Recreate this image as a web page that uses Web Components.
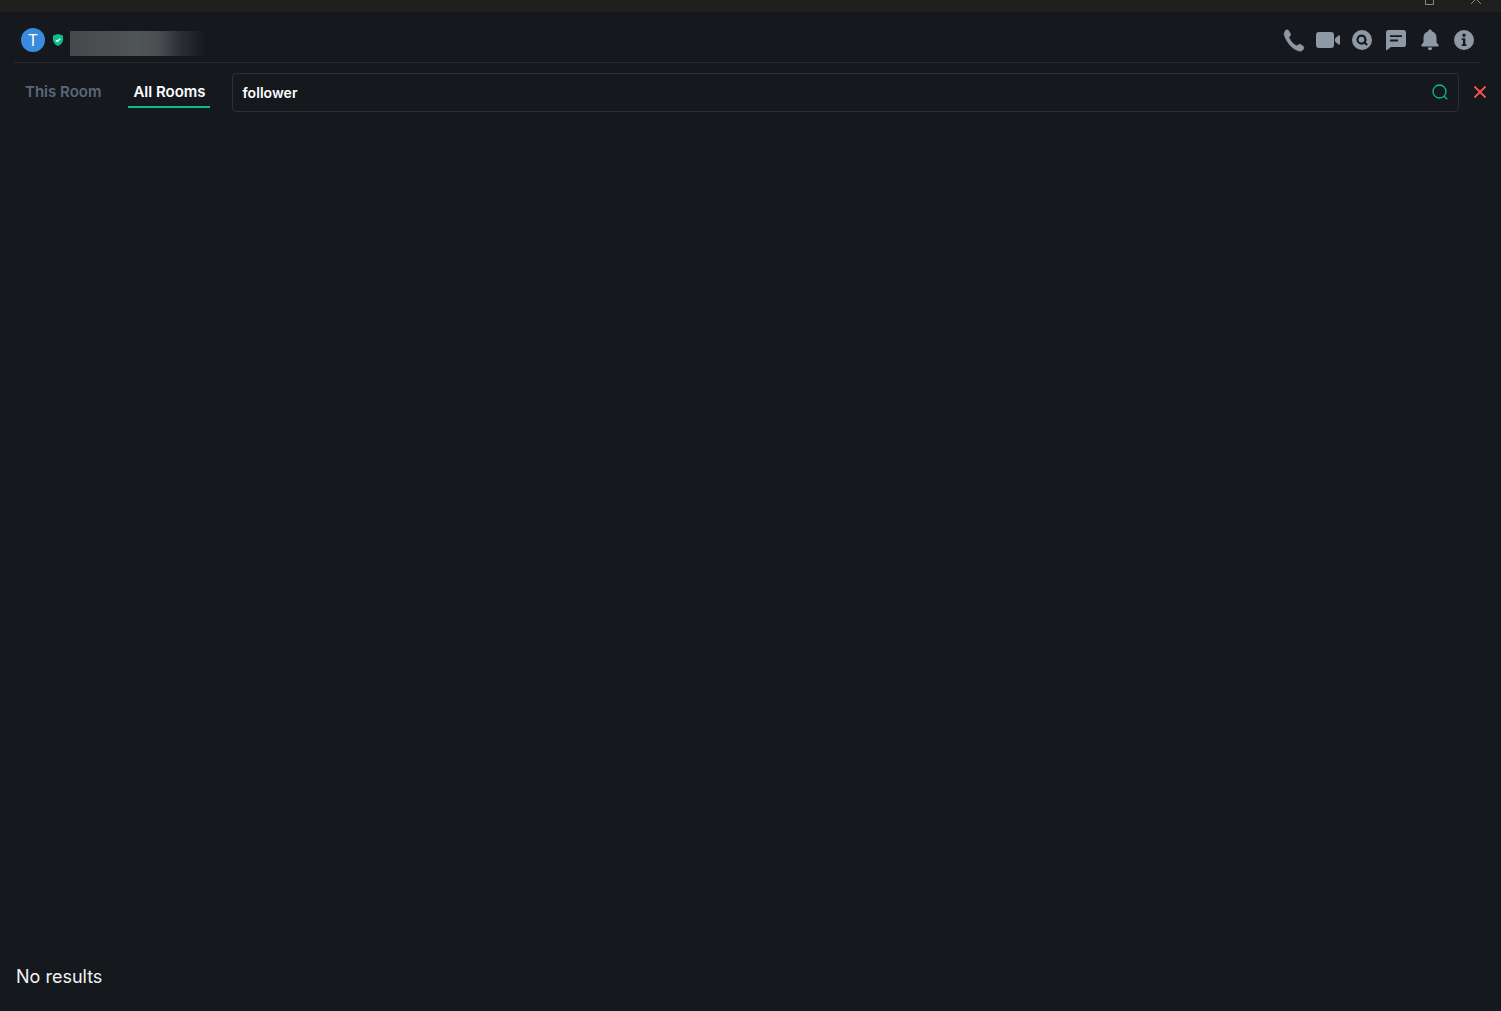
<!DOCTYPE html>
<html>
<head>
<meta charset="utf-8">
<title>Search</title>
<style>
  html, body { margin: 0; height: 100%; background: #15191e; }
  body { font-family: Inter, "Liberation Sans", sans-serif; color: #fff; overflow: hidden; }
</style>
</head>
<body>
<chat-app>
  <title-bar slot="top"></title-bar>
  <room-header slot="top"></room-header>
  <search-bar slot="top" value="follower"></search-bar>
  <span slot="status">No results</span>
</chat-app>

<script>
class ChatApp extends HTMLElement {
  constructor() {
    super();
    this.attachShadow({mode: 'open'});
    this.shadowRoot.innerHTML = `
      <style>
        :host { display: flex; flex-direction: column; height: 100vh; }
        main { flex: 1; }
        footer { height: 45px; padding-left: 16px; font-size: 18px; line-height: 22px; color: #f2f3f4; }
      </style>
      <slot name="top"></slot>
      <main></main>
      <footer><slot name="status"></slot></footer>
    `;
  }
}

class TitleBar extends HTMLElement {
  constructor() {
    super();
    this.attachShadow({mode: 'open'});
    this.shadowRoot.innerHTML = `
      <style>
        :host { display: flex; justify-content: flex-end; align-items: flex-end; height: 12px; background: #201f1f; overflow: hidden; padding-right: 18px; gap: 33px; }
        svg { display: block; margin-bottom: 7px; flex: none; }
        svg.x { margin-bottom: 6px; }
      </style>
      <svg width="12" height="12" viewBox="0 0 12 12" fill="none" stroke="#8b8b8b" stroke-width="1"><path d="M1.500 3.500h8v8h-8zM10.500 1.500v1"/></svg>
      <svg class="x" width="14" height="14" viewBox="0 0 14 14" fill="none" stroke="#8b8b8b" stroke-width="1"><path d="M2 2l10 10M12 2L2 12"/></svg>
    `;
  }
}

class RoomHeader extends HTMLElement {
  constructor() {
    super();
    this.attachShadow({mode: 'open'});
    this.shadowRoot.innerHTML = `
      <style>
        :host { display: flex; align-items: center; height: 44px; margin: 0 21px 0 14px; padding: 6px 4px 0 7px; border-bottom: 1px solid #272b31; box-sizing: content-box; }
        .avatar { width: 24px; height: 24px; border-radius: 50%; background: #3a8bdc; color: #fff; font-size: 16px; font-weight: 400; line-height: 24px; text-align: center; flex: none; }
        .shield { margin-left: 7px; flex: none; display: block; }
        .name { margin: 7px 0 0 6px; width: 136px; height: 25px; background: linear-gradient(90deg, #47484c 0%, #505557 50%, #4a4e51 65%, #2a2d32 82%, #15191e 100%); filter: blur(.4px); }
        .tools { margin-left: auto; display: flex; gap: 10px; }
        .tools svg { width: 24px; height: 24px; display: block; fill: #8e99a5; }
      </style>
      <div class="avatar">T</div>
      <svg class="shield" width="12" height="14" viewBox="0 0 12 14"><path fill="#0dbd8b" d="M6 1l5 1.600v4.200c0 3-2.200 5-5 6.200-2.800-1.200-5-3.200-5-6.200V2.600z"/><path fill="none" stroke="#fff" stroke-width="1.300" d="M3.800 7.200l1.500 1.300 3-2.700"/></svg>
      <div class="name"></div>
      <div class="tools">
        <svg viewBox="0 0 24 24"><path transform="translate(-.8 -.3)" stroke="#8e99a5" stroke-width=".6" d="M4.200 2.800c1-1 2.600-.9 3.300.3l1.500 2.500c.6 1 .4 2.100-.4 2.900l-1 1c.8 1.900 2.400 4.500 3.700 5.800 1.300 1.300 2.700 2.300 4.500 3l1.100-1c.8-.8 2-.9 2.900-.3l1.900 1.300c1.200.8 1.300 2.400.3 3.400l-.8.800c-.8.800-2 1.100-3.100.9-3.300-.8-6.600-3-9-5.500C6.200 14.300 3.700 10.300 3 6.800c-.2-1 .1-2.100.8-2.800z"/></svg>
        <svg viewBox="0 0 24 24"><rect x="0" y="4" width="18" height="16" rx="3"/><path d="M19 10.500l3.500-3c.6-.5 1.500-.1 1.500.7v7.600c0 .8-.9 1.200-1.500.7l-3.500-3z"/></svg>
        <svg viewBox="0 0 24 24"><path fill-rule="evenodd" d="M12 2a10 10 0 1 1 0 20 10 10 0 0 1 0-20zm-.6 4.600a5 5 0 1 0 2.900 9.100l2.100 2.100 1.500-1.500-2.100-2.100a5 5 0 0 0-4.400-7.600zm0 2.100a2.900 2.900 0 1 1 0 5.800 2.900 2.900 0 0 1 0-5.800z"/></svg>
        <svg viewBox="0 0 24 24"><path fill-rule="evenodd" d="M4.500 2h15A2.500 2.500 0 0 1 22 4.500v12a2.500 2.500 0 0 1-2.500 2.500H7l-4.200 3.200c-.3.200-.8 0-.8-.4V4.500A2.500 2.500 0 0 1 4.500 2zM6 7.200v1.900h12V7.200zm0 4.300v1.900h8v-1.900z"/></svg>
        <svg viewBox="0 0 24 24"><path d="M12 1.500c1 0 1.700.7 1.800 1.700 2.900.8 4.700 3.200 4.700 6.300v4.300c0 .9.700 1.500 1.700 2.500.9.900.6 2.200-.7 2.200H4.500c-1.300 0-1.600-1.300-.7-2.200 1-1 1.700-1.600 1.700-2.500V9.500c0-3.100 1.800-5.500 4.700-6.300.1-1 .8-1.700 1.800-1.700zM9.700 19.500h4.600c0 1.500-1 2.800-2.300 2.800s-2.300-1.300-2.300-2.800z"/></svg>
        <svg viewBox="0 0 24 24"><path fill-rule="evenodd" d="M12 2a10 10 0 1 1 0 20 10 10 0 0 1 0-20zm0 3.500a1.700 1.700 0 1 0 0 3.400 1.700 1.700 0 0 0 0-3.400zM9.800 10.300v1.600h1.200v4.300H9.800v1.700h4.600v-1.700h-1.100v-5.900z"/></svg>
      </div>
    `;
  }
}

class SearchBar extends HTMLElement {
  constructor() {
    super();
    this.attachShadow({mode: 'open'});
    this.shadowRoot.innerHTML = `
      <style>
        :host { display: flex; align-items: center; height: 39px; margin-top: 10px; padding-left: 14px; }
        .tab { align-self: flex-start; margin-top: 3px; font-size: 15px; font-weight: 600; line-height: 18px; color: #5c6679; padding: 7px 5px 5px; border-bottom: 2px solid transparent; width: 72px; text-align: center; box-sizing: content-box; white-space: nowrap; }
        .tab.first { margin-left: 6px; width: auto; padding-left: 5px; }
        .tab.on { color: #fff; border-bottom-color: #0dbd8b; margin-left: 22px; }
        .box { margin-left: 22px; width: 1227px; height: 39px; box-sizing: border-box; border: 1px solid #2c3036; border-radius: 4px; display: flex; align-items: center; padding: 0 9px 0 9px; }
        .box span { font-size: 14px; font-weight: 600; letter-spacing: .06px; color: #fff; flex: 1; }
        .box svg { display: block; margin-top: -2px; }
        .close { margin-left: 14px; display: block; margin-top: -2px; }
      </style>
      <div class="tab first">This Room</div>
      <div class="tab on">All Rooms</div>
      <div class="box">
        <span></span>
        <svg width="18" height="18" viewBox="0 0 18 18" fill="none" stroke="#0dbd8b" stroke-width="1.300"><circle cx="8.500" cy="8.500" r="6.500"/><path d="M13.200 13.200l3 3"/></svg>
      </div>
      <svg class="close" width="14" height="14" viewBox="0 0 14 14" fill="none" stroke="#f0524f" stroke-width="2"><path d="M1.500 1.500l11 11M12.500 1.500l-11 11"/></svg>
    `;
  }
  connectedCallback() {
    this.shadowRoot.querySelector('.box span').textContent = this.getAttribute('value') || '';
  }
}

customElements.define('chat-app', ChatApp);
customElements.define('title-bar', TitleBar);
customElements.define('room-header', RoomHeader);
customElements.define('search-bar', SearchBar);
</script>
</body>
</html>
